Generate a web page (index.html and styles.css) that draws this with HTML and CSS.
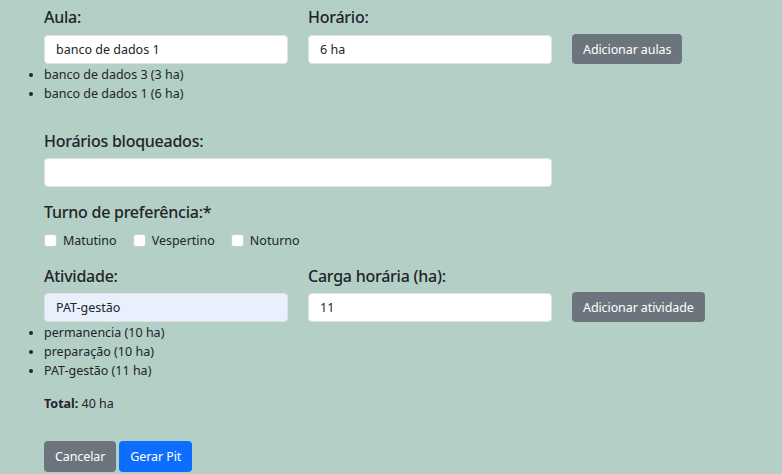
FILE: index.html
```html
<!DOCTYPE html>
<html lang="pt">
<head>
<meta charset="utf-8">
<link rel="stylesheet" href="styles.css">
</head>
<body>
<main class="page">
  <section class="row row-first">
    <div class="field">
      <label class="lbl">Aula:</label>
      <input class="ctl" type="text" value="banco de dados 1">
    </div>
    <div class="field">
      <label class="lbl">Horário:</label>
      <input class="ctl" type="text" value="6 ha">
    </div>
    <button class="btn btn-grey">Adicionar aulas</button>
  </section>
  <ul class="items">
    <li>banco de dados 3 (3 ha)</li>
    <li>banco de dados 1 (6 ha)</li>
  </ul>

  <section class="block block-blocked">
    <label class="lbl">Horários bloqueados:</label>
    <input class="ctl ctl-wide" type="text" value="">
  </section>

  <section class="block block-turno">
    <label class="lbl">Turno de preferência:*</label>
    <div class="checks">
      <label class="chk"><input type="checkbox"><span>Matutino</span></label>
      <label class="chk"><input type="checkbox"><span>Vespertino</span></label>
      <label class="chk"><input type="checkbox"><span>Noturno</span></label>
    </div>
  </section>

  <section class="row row-act">
    <div class="field">
      <label class="lbl">Atividade:</label>
      <input class="ctl ctl-fill" type="text" value="PAT-gestão">
    </div>
    <div class="field">
      <label class="lbl">Carga horária (ha):</label>
      <input class="ctl" type="text" value="11">
    </div>
    <button class="btn btn-grey">Adicionar atividade</button>
  </section>
  <ul class="items">
    <li>permanencia (10 ha)</li>
    <li>preparação (10 ha)</li>
    <li>PAT-gestão (11 ha)</li>
  </ul>

  <p class="total"><strong>Total:</strong> 40 ha</p>

  <div class="actions">
    <button class="btn btn-grey">Cancelar</button>
    <button class="btn btn-blue">Gerar Pit</button>
  </div>
</main>
</body>
</html>
```
FILE: styles.css
```css
* { box-sizing: border-box; }
html, body {
  margin: 0;
  background: #b4cfc6;
  color: #212529;
  font-family: "Noto Sans", "Open Sans", sans-serif;
}
.page {
  padding: 5px 0 0 44px;
  width: 782px;
  height: 474px;
  overflow: hidden;
}
.row {
  display: flex;
  align-items: flex-end;
  gap: 20px;
}
.field {
  display: flex;
  flex-direction: column;
  width: 244px;
}
.lbl {
  display: block;
  font-size: 16px;
  font-weight: 500;
  letter-spacing: -0.25px;
  line-height: 24px;
  margin-bottom: 6px;
}
.ctl {
  height: 29px;
  width: 244px;
  border: 1px solid #dee2e6;
  border-radius: 4px;
  background: #fff;
  padding: 0 11px;
  font-family: inherit;
  font-size: 12.5px;
  color: #212529;
  outline: none;
}
.ctl-wide { width: 508px; }
.ctl-fill { background: #e8f0fe; }
.btn {
  height: 30px;
  border: 0;
  border-radius: 4px;
  padding: 0 11px;
  font-family: inherit;
  font-size: 12.5px;
  letter-spacing: -0.1px;
  color: #fff;
  cursor: pointer;
}
.btn-grey { background: #6c757d; }
.btn-blue { background: #0d6efd; }
.items {
  margin: 1px 0 0 -44px;
  padding-left: 44px;
  font-size: 12.5px;
  line-height: 19px;
}
.block { display: flex; flex-direction: column; }
.block-blocked { margin-top: 26px; }
.block-blocked .lbl { margin-bottom: 5px; }
.block-turno { margin-top: 13px; }
.block-turno .lbl { margin-bottom: 7px; }
.checks {
  display: flex;
  gap: 16px;
  font-size: 12.5px;
  line-height: 19px;
}
.chk {
  display: flex;
  align-items: center;
  gap: 6px;
}
.chk input {
  appearance: none;
  -webkit-appearance: none;
  width: 13px;
  height: 13px;
  margin: 0;
  background: #fff;
  border: 1px solid #c8cfd4;
  border-radius: 3px;
}
.row-act { margin-top: 14px; }
.row-act .lbl { margin-bottom: 5px; }
.total {
  margin: 14px 0 0;
  font-size: 12.5px;
  line-height: 19px;
}
.actions {
  margin-top: 28px;
  display: flex;
  gap: 3px;
}
.actions .btn { height: 31px; }
```
